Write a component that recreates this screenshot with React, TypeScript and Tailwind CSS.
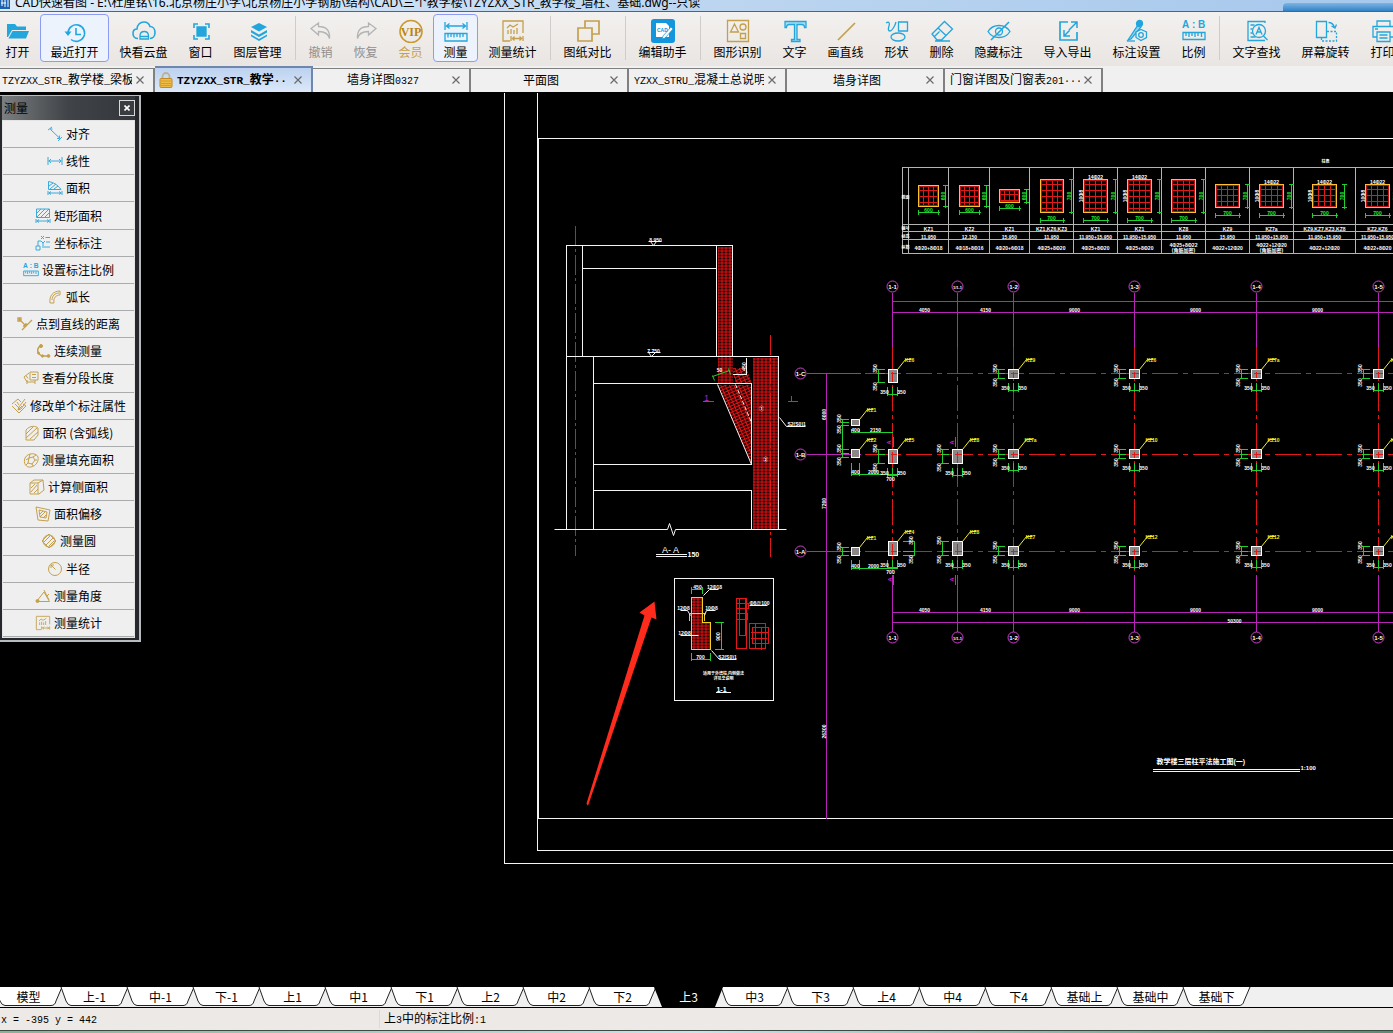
import React from "react";

const BLUE = "#22a6dc";
const GOLD = "#c4a04c";
const GRAY = "#b4b4b4";

type IconProps = { color?: string; size?: number; children: React.ReactNode; box?: number };

function Icon({ color = BLUE, size = 24, box = 24, children }: IconProps) {
  return (
    <svg
      width={size}
      height={size}
      viewBox={`0 0 ${box} ${box}`}
      fill="none"
      stroke={color}
      strokeWidth={1.3}
      className="shrink-0"
      aria-hidden="true"
    >
      {children}
    </svg>
  );
}

const RULER_24 = (
  <>
    <path d="M1 3v8M23 3v8M2 7h20M5.500 4.500L2.500 7l3 2.500M18.500 4.500l3 2.500-3 2.500" />
    <path d="M1 14.500h22v7.500H1zM4 15v3.500M7 15v3M10 15v3.500M13 15v3M16 15v3.500M19 15v3" />
  </>
);

const STATS = (
  <>
    <path d="M9 22H2V2h20v12" />
    <path d="M6 9l3-3 3 2 5-3M7 11v4M10 10v5M13 11v4M16 9v6" />
    <path d="M10 17v5M22 17v5M11 19.500h10M13.500 17.500l-2 2 2 2M18.500 17.500l2 2-2 2" />
  </>
);

function RatioMarks() {
  return (
    <>
      <text x="0" y="9" fontSize="10" fontWeight="bold" fill={BLUE} stroke="none" fontFamily="Liberation Sans, sans-serif">
        A
      </text>
      <text x="10" y="9" fontSize="10" fontWeight="bold" fill={BLUE} stroke="none" fontFamily="Liberation Sans, sans-serif">
        :
      </text>
      <text x="16" y="9" fontSize="10" fontWeight="bold" fill={BLUE} stroke="none" fontFamily="Liberation Sans, sans-serif">
        B
      </text>
      <path d="M1 13.500h22v7H1zM4 14v3M7 14v4M10 14v3M13 14v4M16 14v3M19.500 14v4" />
    </>
  );
}

type Tool = { label: string; icon: React.ReactNode; on?: boolean; tone?: "gray" | "gold"; sep?: boolean };

const TOOLS: Tool[] = [
  {
    label: "打开",
    icon: (
      <Icon>
        <path d="M1 5h8l2 2.500h9V11H6L2 18H1z" fill={BLUE} stroke="none" />
        <path d="M6.500 12H23l-3 7.500H2.500z" fill={BLUE} stroke="none" />
      </Icon>
    ),
  },
  {
    label: "最近打开",
    on: true,
    icon: (
      <Icon>
        <path d="M5 13.500a8.300 8.300 0 1 1 3 7" strokeWidth="1.600" />
        <path d="M1.500 12.500h7L5 17z" fill={BLUE} stroke="none" />
        <path d="M13 9v6.500h5" strokeWidth="1.600" />
      </Icon>
    ),
  },
  {
    label: "快看云盘",
    icon: (
      <Icon>
        <path d="M6 19.500c-3 0-5-2-5-5s2-4.500 4-4.500c0-4 3-7 7-7 3 0 5 1.500 6 4.500 3 0 5 2.500 5 6 0 3.500-2 6-5 6" strokeWidth="1.600" />
        <path d="M8 20v-3c0-3 2-4.500 4.300-4.500s4.200 1.500 4.200 4.500v3zM8 17.500h8.500" />
      </Icon>
    ),
  },
  {
    label: "窗口",
    icon: (
      <Icon>
        <path d="M8 8h9v9H8z" fill={BLUE} />
        <path d="M5 9V5h4M16 5h4v4M20 16v4h-4M9 20H5v-4" strokeWidth="1.600" />
      </Icon>
    ),
  },
  {
    label: "图层管理",
    icon: (
      <Icon>
        <path d="M13 4l8 4-8 4.500L5 8z" fill={BLUE} stroke="none" />
        <path d="M5 11l8 4.500 8-4.500v2.500L13 18l-8-4.500z" fill={BLUE} stroke="none" />
        <path d="M5 15.500l8 4.500 8-4.500v1.800L13 22l-8-4.700z" fill={BLUE} stroke="none" />
      </Icon>
    ),
  },
  {
    label: "撤销",
    sep: true,
    tone: "gray",
    icon: (
      <Icon color={GRAY}>
        <path d="M2 9.500L9.500 4v3.500c8 0 11.500 4 11 12-1-4-4-7-11-7V16z" />
      </Icon>
    ),
  },
  {
    label: "恢复",
    tone: "gray",
    icon: (
      <Icon color={GRAY}>
        <path d="M22 9.500L14.500 4v3.500c-8 0-11.500 4-11 12 1-4 4-7 11-7V16z" />
      </Icon>
    ),
  },
  {
    label: "会员",
    tone: "gold",
    icon: (
      <Icon color="#c9992f">
        <circle cx="12" cy="12.500" r="11" strokeWidth="1.600" />
        <text
          x="12"
          y="16.500"
          textAnchor="middle"
          fontSize="12"
          fontWeight="bold"
          fill="#b98414"
          stroke="none"
          fontFamily="Liberation Serif, serif"
        >
          VIP
        </text>
      </Icon>
    ),
  },
  { label: "测量", on: true, icon: <Icon>{RULER_24}</Icon> },
  { label: "测量统计", icon: <Icon color={GOLD}>{STATS}</Icon> },
  {
    label: "图纸对比",
    sep: true,
    icon: (
      <Icon color={GOLD}>
        <path d="M9 9V2h14v13h-7M2 9h14v13H2z" strokeWidth="1.700" />
      </Icon>
    ),
  },
  {
    label: "编辑助手",
    sep: true,
    icon: (
      <Icon>
        <rect x="0" y="0" width="24" height="24" rx="3" fill="#1496dc" stroke="none" />
        <path d="M5 4h10l3 3v11H5z" fill="#fff" stroke="none" />
        <path d="M22 10l-8 9-3 1 1-3 8-9z" fill="#fff" stroke="#1496dc" strokeWidth=".7" />
        <text x="6" y="13" fontSize="5" fontWeight="bold" fill="#1496dc" stroke="none" fontFamily="Liberation Sans, sans-serif">
          CAD
        </text>
      </Icon>
    ),
  },
  {
    label: "图形识别",
    sep: true,
    icon: (
      <Icon color={GOLD}>
        <path d="M1.500 1.500h21v21h-21zM8.500 5l4 8h-8zM14.500 14.500h5v5h-5z" />
        <circle cx="17" cy="8" r="3" />
      </Icon>
    ),
  },
  {
    label: "文字",
    icon: (
      <Icon>
        <path d="M2 2.500h21v6h-1.500c0-2-1-3-3-3H14v15h3v2H8.500v-2h3v-15h-5c-2 0-3 1-3 3H2z" fill="#a5dcf2" />
      </Icon>
    ),
  },
  {
    label: "画直线",
    icon: (
      <Icon color={GOLD}>
        <path d="M4 21L21 4" strokeWidth="1.700" />
      </Icon>
    ),
  },
  {
    label: "形状",
    icon: (
      <Icon>
        <path d="M1 4c3-2 4 0 3 3s-1 5 1 5 5-5 6-9" />
        <path d="M13.500 3h9v9h-9z" />
        <ellipse cx="13" cy="18" rx="7" ry="4" />
      </Icon>
    ),
  },
  {
    label: "删除",
    icon: (
      <Icon>
        <path d="M2 15L14.500 2.500l8 7.500-11 11H7zM8 9l8 7.500M4.500 17.500l5-5M5 22h15" />
      </Icon>
    ),
  },
  {
    label: "隐藏标注",
    icon: (
      <Icon>
        <path d="M1 12.500c5-8 17-8 22 0-5 8-17 8-22 0z" />
        <circle cx="12" cy="12.500" r="3.500" />
        <path d="M22 3L4 21" strokeWidth="1.600" />
      </Icon>
    ),
  },
  {
    label: "导入导出",
    icon: (
      <Icon>
        <path d="M12 3H4v18h17v-8" strokeWidth="1.700" />
        <path d="M15 3h6v6M20.500 3.500L13 11M8 11v6h6M8.500 16.500l5-5" strokeWidth="1.500" />
      </Icon>
    ),
  },
  {
    label: "标注设置",
    icon: (
      <Icon>
        <path d="M3 21L13 6l3 2L6 20z" fill="#8fd3ef" />
        <circle cx="14.500" cy="4.500" r="3" fill={BLUE} />
        <path d="M16 10.500l5.500 2.500v5.500L16 21.500l-5-3V13z" fill="#efeceb" />
        <circle cx="16" cy="16" r="2.300" />
        <path d="M2 22h8" />
      </Icon>
    ),
  },
  {
    label: "比例",
    icon: (
      <Icon>
        <RatioMarks />
      </Icon>
    ),
  },
  {
    label: "文字查找",
    sep: true,
    icon: (
      <Icon>
        <path d="M20 4V2.500H3v19h17M5.500 6h4M5.500 10h2M5.500 14h2M5.500 18h5" />
        <circle cx="14" cy="12" r="6.500" />
        <path d="M18.500 17l4 4M11 15.500l3-7 3 7M12 13h4" />
      </Icon>
    ),
  },
  {
    label: "屏幕旋转",
    icon: (
      <Icon>
        <path d="M2.500 2.500h10v16h-10z" />
        <path d="M13 12.500h9.500v9.500h-15v-3" strokeDasharray="2 1.500" />
        <path d="M14.500 3.500c3 0 5 2 6 5M17.500 7l3.500 2 1.500-3.500" />
      </Icon>
    ),
  },
  {
    label: "打印",
    icon: (
      <Icon>
        <path d="M6 7V2h13v5M6 18H2V7.500h21V18h-4M6 13h13v9.500H6zM8.500 16h8M8.500 19h8M4 10h3" />
      </Icon>
    ),
  },
];

type Measure = { label: string; icon: React.ReactNode; gold?: boolean };

const MEASURES: Measure[] = [
  { label: "对齐", icon: <path d="M1 4l4-3M11 15l4-4M3.500 3.500l9 8.500M3 3h2.500M12.500 9.500v3H10" /> },
  { label: "线性", icon: <path d="M1 4v8M15 4v8M1.500 8h13M4 6L2 8l2 2M12 6l2 2-2 2" /> },
  { label: "面积", icon: <path d="M1.500 9.500v-8c5 1 9 3 12.500 8zM2 6l4-3M3 9l6-5M7 9l4-3M1 11v4M15 11v4M1.500 13h13M4 11.500L2 13l2 1.500M12 11.500l2 1.500-2 1.500" /> },
  { label: "矩形面积", icon: <path d="M1.500 1h13v8.500h-13zM2 5l4-4M2 9l8-8M6 9l8-8M10 9l4-4M1 11v4M15 11v4M1.500 13h13M4 11.500L2 13l2 1.500M12 11.500l2 1.500-2 1.500" /> },
  { label: "坐标标注", icon: <path d="M1 11h4v4H1zM3 11V6h3M6 1l3 3M9 1L6 4M10.500 2.500H15M6 6l2 2 2-2M8 8v3M11 7h4M7 12h8" /> },
  { label: "设置标注比例", icon: null },
  { label: "弧长", gold: true, icon: <path d="M3 14C2 7 6 2 13 2v4C9 6 6 9 7 14zM5 11c0-4 3-7 7-7" /> },
  { label: "点到直线的距离", gold: true, icon: <path d="M5 14L15 4M2 3l7 7M9 7v3H6M1 2h3v3H1z" strokeWidth="1.300" /> },
  {
    label: "连续测量",
    gold: true,
    icon: (
      <>
        <path d="M6 3C2 4 2 9 4 11l3 2h6" strokeWidth="1.500" />
        <circle cx="6" cy="3" r="1.500" fill={GOLD} />
        <circle cx="3.500" cy="10" r="1" fill={GOLD} />
        <circle cx="7.500" cy="13" r="1.200" fill={GOLD} />
        <circle cx="13.500" cy="13" r="1.400" fill={GOLD} />
      </>
    ),
  },
  { label: "查看分段长度", gold: true, icon: <path d="M7 2h8v8H7zM9 4.500h4M9 7.500h4M6 3L1 7l3 5h8M3 5.500l2 3M4 10v4M12 10v4" /> },
  { label: "修改单个标注属性", gold: true, icon: <path d="M1 6l6-5 3 3M12 6l3 2-7 7-7-7M4 6l4 4M6 4l2 3M14 1L8 9l-1 3 3-1 5-7M7 12l4-4" /> },
  { label: "面积 (含弧线)", gold: true, icon: <path d="M2 5c4-5 10-4 12-2v7l-4 5H2zM2 9l7-7M2 13L13 3M6 14l8-7" /> },
  { label: "测量填充面积", gold: true, icon: <path d="M2 6c3-6 12-5 13-1s-2 9-7 10-8-4-6-9zM6 6l4-1 2 3-3 4-4-1zM3 8l3-2M7 2L6 6M13 3l-3 2M14 8h-2M10 14l-1-2M3 13l2-2" /> },
  { label: "计算侧面积", gold: true, icon: <path d="M1 4l4-3h9l1 10-5 4H1zM1 4h8v11M9 4l5-3M2 9l4-4M2 13l6-7M5 14l4-4" /> },
  { label: "面积偏移", gold: true, icon: <path d="M1 1l14 3-2 11-10-1zM4 4l8 2-1 6-6-1zM5 8l3-3M5 11l5-5M8 12l3-3" /> },
  { label: "测量圆", gold: true, icon: <><circle cx="8" cy="8" r="6" /><path d="M8 1l7 7-7 7-7-7zM3 9l6-6M5 12l7-7M8 13l5-5" /></> },
  { label: "半径", gold: true, icon: <><circle cx="8" cy="8" r="6.500" /><path d="M8.500 8.500L4 4M4 7V4h3" /></> },
  { label: "测量角度", gold: true, icon: <><path d="M1.500 13.500h13L9 4zM9 2l5 10M12 8l2-2" /><circle cx="2.500" cy="13" r="1.500" fill={GOLD} /></> },
  { label: "测量统计", gold: true, icon: null },
];

const DOC_TABS = [
  { label: "TZYZXX_STR_教学楼_梁板" },
  { label: "TZYZXX_STR_教学··", active: true },
  { label: "墙身详图0327" },
  { label: "平面图" },
  { label: "YZXX_STRU_混凝土总说明" },
  { label: "墙身详图" },
  { label: "门窗详图及门窗表201···" },
];

const SHEETS = [
  "模型", "上-1", "中-1", "下-1", "上1", "中1", "下1", "上2", "中2", "下2",
  "上3", "中3", "下3", "上4", "中4", "下4", "基础上", "基础中", "基础下",
];

/* Latin runs are set in a half-width monospace beside full-width Chinese. */
function Mixed({ text, bold }: { text: string; bold?: boolean }) {
  return (
    <>
      {text.split(/([\x20-\x7e\xb7]+)/).map((part, i) =>
        /^[\x20-\x7e\xb7]+$/.test(part) ? (
          <span
            key={i}
            className={
              bold
                ? "whitespace-pre font-['Liberation_Mono',monospace] text-[11px]"
                : "whitespace-pre font-['Liberation_Mono',monospace] text-[10px]"
            }
          >
            {part}
          </span>
        ) : (
          part
        ),
      )}
    </>
  );
}

function ToolButton({ tool }: { tool: Tool }) {
  const n = tool.label.length;
  const width = n === 2 ? "w-[45px]" : n === 3 ? "w-[57px]" : "w-[69px]";
  const tone = tool.tone === "gray" ? "text-[#8f8f8f]" : tool.tone === "gold" ? "text-[#c9a04a]" : "text-black";
  const state = tool.on ? "border-[#8c9cf5] bg-[#edf3fd]" : "border-transparent";
  return (
    <button
      type="button"
      className={`flex h-12 shrink-0 flex-col items-center gap-px rounded border pt-1 text-xs whitespace-nowrap ${width} ${tone} ${state}`}
    >
      {tool.icon}
      <span>{tool.label}</span>
    </button>
  );
}

const WHITE = "#f4f4f4";
const RED = "#e01818";
const GREEN = "#20d030";
const PURPLE = "#b823b8";
const YELLOW = "#f2ee20";

type LabelProps = { x: number; y: number; s?: number; c?: string; up?: boolean; start?: boolean; children: React.ReactNode };

function Label({ x, y, s = 5, c = "#fff", up, start, children }: LabelProps) {
  return (
    <text
      x={x}
      y={y}
      fontSize={s}
      fontWeight={s < 9 ? "bold" : "normal"}
      fill={c}
      stroke="none"
      textAnchor={start ? "start" : "middle"}
      transform={up ? `rotate(-90 ${x} ${y})` : undefined}
    >
      {children}
    </text>
  );
}

const AXES = [
  { x: 892, name: "1-1" },
  { x: 957, name: "1/1-1" },
  { x: 1013, name: "1-2" },
  { x: 1134, name: "1-3" },
  { x: 1256, name: "1-4" },
  { x: 1378, name: "1-5" },
];

const ROWS = [
  { y: 373, name: "1-C" },
  { y: 454, name: "1-B" },
  { y: 551, name: "1-A" },
];

const SPANS = [
  { x: 924, t: "4050" },
  { x: 985, t: "4150" },
  { x: 1074, t: "9000" },
  { x: 1195, t: "9000" },
  { x: 1317, t: "9000" },
];

type Section = { x: number; y: number; w: number; h: number; c: number; name: string; level: string; bars: string[]; extra?: boolean; dim: string };

const SECTIONS: Section[] = [
  { x: 918, y: 185, w: 20, h: 21, c: 928, name: "KZ1", level: "11.950", bars: ["4Φ20+8Φ18"], dim: "600" },
  { x: 959, y: 185, w: 20, h: 21, c: 969, name: "KZ2", level: "12.150", bars: ["4Φ18+8Φ16"], dim: "600" },
  { x: 999, y: 189, w: 20, h: 13, c: 1009, name: "KZ1", level: "15.950", bars: ["4Φ20+6Φ18"], dim: "600" },
  { x: 1040, y: 179, w: 23, h: 33, c: 1051, name: "KZ1,KZ6,KZ3", level: "11.950", bars: ["4Φ25+8Φ20"], dim: "700" },
  { x: 1083, y: 179, w: 24, h: 33, c: 1095, name: "KZ1", level: "11.950+15.950", bars: ["4Φ25+8Φ20"], extra: true, dim: "700" },
  { x: 1127, y: 179, w: 24, h: 33, c: 1139, name: "KZ1", level: "11.950+15.950", bars: ["4Φ25+8Φ20"], extra: true, dim: "700" },
  { x: 1171, y: 179, w: 24, h: 33, c: 1183, name: "KZ8", level: "11.950", bars: ["4Φ25+8Φ22", "(角筋加密)"], dim: "700" },
  { x: 1215, y: 184, w: 24, h: 23, c: 1227, name: "KZ9", level: "15.950", bars: ["4Φ22+12Φ20"], dim: "700" },
  { x: 1259, y: 184, w: 24, h: 23, c: 1271, name: "KZ7a", level: "11.950+15.950", bars: ["4Φ22+12Φ20", "(角筋加密)"], extra: true, dim: "700" },
  { x: 1312, y: 184, w: 24, h: 23, c: 1324, name: "KZ9,KZ7,KZ3,KZ8", level: "11.950+15.950", bars: ["4Φ22+12Φ20"], extra: true, dim: "700" },
  { x: 1365, y: 184, w: 24, h: 23, c: 1377, name: "KZ2,KZ6", level: "11.950+15.950", bars: ["4Φ22+8Φ20"], extra: true, dim: "700" },
];

function SectionCell({ s }: { s: Section }) {
  const right = s.x + s.w + (s.w > 22 ? 8 : 7);
  const bottom = s.y + s.h + (s.w > 22 ? 8 : 6);
  return (
    <g>
      <path
        stroke={RED}
        d={[1, 2, 3].map((k) => `M${s.x + Math.round((s.w * k) / 4)} ${s.y}v${s.h}`).join("")}
      />
      <path
        stroke={RED}
        d={Array.from({ length: Math.floor((s.h - 5) / 6) + 1 }, (_, k) => `M${s.x} ${s.y + 5 + k * 6}h${s.w}`).join("")}
      />
      <rect x={s.x + 1} y={s.y + 1} width={s.w - 2} height={s.h - 2} stroke="#c01010" />
      <rect x={s.x} y={s.y} width={s.w} height={s.h} stroke="#ffc030" />
      <path
        stroke={GREEN}
        d={`M${right} ${s.y - 1}v${s.h + 2}M${right - 3} ${s.y}h5M${right - 3} ${s.y + s.h}h5M${s.x - 1} ${bottom}h${s.w + 2}M${s.x} ${bottom - 3}v5M${s.x + s.w} ${bottom - 3}v5`}
      />
      <Label x={s.c} y={bottom - 1} c="#20f030">{s.dim}</Label>
      <Label x={right - 1} y={s.y + s.h / 2} c="#20f030" up>{s.dim}</Label>
      {s.extra && (
        <>
          <Label x={s.c} y={s.y - 1}>14Φ22</Label>
          <Label x={s.x - 1} y={s.y + s.h / 2} up>10Φ8</Label>
        </>
      )}
      <Label x={s.c} y={230}>{s.name}</Label>
      <Label x={s.c} y={238}>{s.level}</Label>
      {s.bars.map((b, i) => (
        <Label key={b} x={s.c} y={249 + i * 5 - (s.bars.length - 1) * 3}>{b}</Label>
      ))}
    </g>
  );
}

type Column = { x: number; y: number; w: number; h: number; cx: number; cy: number; name: string; small?: boolean; rightDim?: boolean };

const COLUMNS: Column[] = [
  { x: 888, y: 369, w: 9, h: 13, cx: 892, cy: 373, name: "KZ6" },
  { x: 888, y: 449, w: 9, h: 14, cx: 892, cy: 454, name: "KZ5" },
  { x: 888, y: 541, w: 9, h: 14, cx: 892, cy: 551, name: "KZ4", rightDim: true },
  { x: 952, y: 449, w: 10, h: 14, cx: 957, cy: 454, name: "KZ8" },
  { x: 952, y: 541, w: 10, h: 14, cx: 957, cy: 551, name: "KZ8" },
  ...[1013, 1134, 1256, 1378].flatMap((x, i) => [
    { x: x - 5, y: 369, w: 10, h: 9, cx: x, cy: 373, name: ["KZ9", "KZ6", "KZ7a", "KZ7"][i] },
    { x: x - 5, y: 449, w: 10, h: 9, cx: x, cy: 454, name: ["KZ7a", "KZ10", "KZ10", "KZ7"][i] },
    { x: x - 5, y: 546, w: 10, h: 9, cx: x, cy: 551, name: ["KZ7", "KZ12", "KZ12", "KZ7"][i] },
  ]),
  { x: 851, y: 419, w: 8, h: 6, cx: 855, cy: 422, name: "KZ1", small: true },
  { x: 851, y: 449, w: 8, h: 8, cx: 855, cy: 453, name: "KZ2", small: true },
  { x: 851, y: 547, w: 8, h: 8, cx: 855, cy: 551, name: "KZ1", small: true },
];

function PlanColumn({ c }: { c: Column }) {
  const b = c.y + c.h;
  const left = c.small ? c.x - 9 : c.rightDim ? c.x + 26 : c.x - 10;
  const tick = c.rightDim ? -12 : 8;
  const start = c.rightDim ? left : left - 2;
  return (
    <g>
      <rect x={c.x} y={c.y} width={c.w} height={c.h} fill="#8b8787" stroke="#fff" />
      {!c.small && <path stroke={RED} d={`M${c.cx} ${c.y + 2}v${c.h - 3}M${c.x + 2} ${c.cy}h${c.w - 3}`} />}
      <path stroke={GREEN} d={`M${left} ${c.y}v${c.h}M${start} ${c.y}h${tick}M${start} ${c.cy}h${tick}M${start} ${b}h${tick}`} />
      {!c.small && (
        <>
          <path stroke={GREEN} d={`M${c.cx - 5} ${b + 4}v9M${c.cx} ${b + 4}v9M${c.cx + 5} ${b + 4}v9M${c.cx - 5} ${b + 12}h10`} />
          <Label x={c.cx - 8} y={b + 11}>350</Label>
          <Label x={c.cx + 9} y={b + 11}>350</Label>
        </>
      )}
      <Label x={left - 2} y={c.y - 1} up>350</Label>
      <Label x={left - 2} y={b + 4} up>350</Label>
      <path stroke={YELLOW} shapeRendering="auto" d={`M${c.x + c.w} ${c.y}l8 -10h6`} />
      <Label x={c.x + c.w + 12} y={c.y - 8} c={YELLOW}>{c.name}</Label>
    </g>
  );
}

function Bubble({ x, y, name }: { x: number; y: number; name: string }) {
  return (
    <g>
      <circle cx={x} cy={y} r="5.500" stroke="#d040d0" shapeRendering="auto" />
      <Label x={x} y={y + 2} s={name.length > 3 ? 4 : 6}>{name}</Label>
    </g>
  );
}

function Drawing() {
  return (
    <svg
      className="block h-full w-full"
      fill="none"
      stroke={WHITE}
      strokeWidth="1"
      shapeRendering="crispEdges"
      fontFamily="'Liberation Sans','Noto Sans CJK SC',sans-serif"
      role="img"
      aria-label="教学楼三层柱平法施工图"
    >
      <defs>
        <pattern id="rebar" width="4" height="3" patternUnits="userSpaceOnUse">
          <rect width="4" height="3" fill="#240000" stroke="none" />
          <path d="M0 1h4M1 0v3" stroke="#e01414" />
        </pattern>
        <pattern id="slant" width="4" height="3" patternUnits="userSpaceOnUse" patternTransform="rotate(-24)">
          <rect width="4" height="3" fill="#240000" stroke="none" />
          <path d="M0 1h4M1 0v3" stroke="#e01414" />
        </pattern>
      </defs>
      <g transform="translate(0.5 -91.5)">
        {/* sheet frames */}
        <path d="M504 92V863H4000M537 92V850H4000M4000 138H538V818H4000" />

        {/* wall section A-A */}
        <g stroke="none" fill="url(#rebar)">
          <rect x="717" y="246" width="15" height="137" />
          <rect x="752" y="357" width="26" height="172" />
        </g>
        <path d="M717 384H751V463zM732 367h14l5 16H735z" fill="url(#slant)" stroke="none" />
        <path d="M575 225V555M770 334V556" stroke={RED} strokeDasharray="20 3 3 3" />
        <path d="M566 529V245H732V356M582 245V356M582 268H716M716 245V356M566 356H778V529M593 356V529M593 383H751V464M593 464H751M593 490H751V529M746 357v17h-14" />
        <path d="M554 529H667l2 -6 4 12 2 -6H786M717 384L751 464" shapeRendering="auto" />
        <path d="M735 384L751 422" strokeDasharray="4 2" shapeRendering="auto" />
        <path d="M648 241h13M650 241l3 4 3 -4M647 352h13M648 352l3 4 4 -4" shapeRendering="auto" />
        <Label x={655} y={241}>8.950</Label>
        <Label x={653} y={352}>7.750</Label>
        <path d="M712 375l2 5M712 376l17 -6M728 368l2 6" stroke={GREEN} shapeRendering="auto" />
        <Label x={719} y={371}>50</Label>
        <Label x={745} y={366} up>450</Label>
        <Label x={761} y={409}>①</Label>
        <Label x={765} y={460}>②</Label>
        <path d="M702 401h11M787 401h10M791 395v6" stroke={PURPLE} />
        <Label x={706} y={400} s={9} c={PURPLE}>1</Label>
        <path d="M779 417L786 426H805" shapeRendering="auto" />
        <Label x={787} y={425} start>S2(S0)1</Label>
        <Label x={670} y={552} s={9}>A- A</Label>
        <path d="M655 554h31M655 556h31" />
        <Label x={687} y={556} s={7} start>150</Label>

        {/* detail 1-1 */}
        <rect x="674" y="578" width="99" height="122" />
        <path d="M691 597h11v25h8v27h-19z" fill="url(#rebar)" stroke="#f0d020" />
        <path d="M689 613v7M704 613v7M689 613h15" stroke="#f0d020" />
        <path d="M691 586v7M702 586v7M691 589h11M714 622h9M714 649h9M721 622v27M691 652v8M710 652v8M691 659h19" stroke={GREEN} />
        <Label x={697} y={588}>450</Label>
        <Label x={719} y={636} up>900</Label>
        <Label x={700} y={658}>700</Label>
        <path d="M703 595l6 -6h9M680 610h7l3 5M715 610h-9l-2 5M680 635h18M711 650l8 9h17M749 605h18" shapeRendering="auto" />
        <Label x={714} y={588}>12Φ18</Label>
        <Label x={683} y={609}>12Φ8</Label>
        <Label x={711} y={609}>10Φ8</Label>
        <Label x={684} y={634}>12Φ8</Label>
        <Label x={727} y={658}>S2(S0)1</Label>
        <Label x={759} y={604}>Φ8@100</Label>
        <path
          d="M736 598h10v50h-10zM739 598v37h6v-37M736 603h12v5h-12M736 613h11v6h-11M749 623h16v25h-16zM752 627h16v16h-16zM755 623v25M761 626v23M750 632h18M750 638h16"
          stroke="#e01818"
        />
        <Label x={723} y={674} s={4}>适用于外墙柱,内侧做法</Label>
        <Label x={723} y={679} s={4}>详见总说明</Label>
        <Label x={721} y={691} s={7}>1-1</Label>
        <path d="M715 692h15" />

        {/* column schedule */}
        <Label x={1325} y={162} s={4}>柱表</Label>
        <path
          stroke="#b4b4b4"
          d="M4000 167H902V253H4000M902 224H4000M902 231H4000M902 239H4000M908 167V253M948 167V253M989 167V253M1029 167V253M1073 167V253M1117 167V253M1161 167V253M1205 167V253M1249 167V253M1293 167V253M1355 167V253"
        />
        <Label x={905} y={198} s={4}>截面</Label>
        <Label x={905} y={229} s={4}>编号</Label>
        <Label x={905} y={237} s={4}>标高</Label>
        <Label x={905} y={248} s={4}>纵筋</Label>
        {SECTIONS.map((s) => (
          <SectionCell key={s.x} s={s} />
        ))}

        {/* grid axes */}
        <path stroke={PURPLE} d="M892 301H4000M892 312H4000M892 612H4000M892 622H4000M826 373V818" />
        {AXES.map((a) => (
          <g key={a.x}>
            <path stroke={PURPLE} d={`M${a.x} 292V346M${a.x} 574V631`} />
            <path stroke={RED} d={`M${a.x} 346V574`} strokeDasharray="26 4 4 4" />
            <Bubble x={a.x} y={286} name={a.name} />
            <Bubble x={a.x} y={637} name={a.name} />
          </g>
        ))}
        {ROWS.map((r) => (
          <g key={r.y}>
            <path stroke={PURPLE} d={`M806 ${r.y}H860`} />
            <path stroke={RED} d={`M864 ${r.y}H4000`} strokeDasharray="26 5 5 5" />
            <Bubble x={800} y={r.y} name={r.name} />
          </g>
        ))}
        {SPANS.map((s) => (
          <g key={s.x}>
            <Label x={s.x} y={311}>{s.t}</Label>
            <Label x={s.x} y={611}>{s.t}</Label>
          </g>
        ))}
        <Label x={1234} y={622}>50300</Label>
        <Label x={825} y={414} up>6000</Label>
        <Label x={825} y={503} up>7200</Label>
        <Label x={825} y={731} up>26300</Label>

        {/* dimension chains beside the first axis */}
        <path stroke={GREEN} d="M842 419v38M851 428v4M859 428v4M851 432h41M851 462v13M859 462v13M851 474h46M851 559v10M859 559v10M851 568h46" />
        <Label x={855} y={431}>400</Label>
        <Label x={875} y={431}>2150</Label>
        <Label x={855} y={473}>400</Label>
        <Label x={873} y={473}>2000</Label>
        <Label x={855} y={567}>400</Label>
        <Label x={873} y={567}>2000</Label>
        <Label x={890} y={480}>700</Label>
        <Label x={890} y={573}>700</Label>
        {COLUMNS.map((c) => (
          <PlanColumn key={`${c.x}-${c.y}`} c={c} />
        ))}
        <path stroke="#d020d0" d="M893 436v10M955 436v10M893 574v10M955 574v10" />
        <Label x={890} y={442} c="#d020d0" s={6} up>A</Label>
        <Label x={953} y={442} c="#d020d0" s={6} up>A</Label>
        <Label x={891} y={579} c="#d020d0" s={6} up>A</Label>
        <Label x={953} y={579} c="#d020d0" s={6} up>A</Label>

        {/* drawing title */}
        <Label x={1156} y={763} s={7} start>教学楼三层柱平法施工图(一)</Label>
        <path d="M1152 769h147M1152 771h147" />
        <Label x={1300} y={769} s={6} start>1:100</Label>

        {/* pointer arrow */}
        <path
          d="M587 805L586 803 644 615 639 612 654 601 656 619 651 617 588 804z"
          fill="#ff2b1c"
          stroke="none"
          shapeRendering="auto"
        />
      </g>
    </svg>
  );
}

function MeasurePalette() {
  return (
    <section
      aria-label="测量"
      className="absolute top-[3px] left-0 w-[141px] border-t border-r-2 border-b-2 border-[#b9bcbf] bg-[#26282b] pr-1 pb-0.5 pl-0.5"
    >
      <header className="flex h-6 items-center justify-between bg-linear-to-r from-[#7c7f80] via-[#404347] to-[#33363a] pl-0.5">
        <h2 className="text-xs text-black">测量</h2>
        <button
          type="button"
          aria-label="关闭测量"
          className="flex size-4 items-center justify-center border border-[#d8d8d8] bg-[#3a3c3f]"
        >
          <svg width="6" height="6" viewBox="0 0 6 6" stroke="#fff" strokeWidth="1.600" aria-hidden="true">
            <path d="M.5.5l5 5M5.500.5l-5 5" />
          </svg>
        </button>
      </header>
      <ul className="grid h-[518px] auto-rows-fr border border-[#e4e4e4] bg-[#efefef]">
        {MEASURES.map((m, i) => (
          <li key={m.label} className="flex border-b border-[#a9abad]">
            <button type="button" className="flex w-full items-center justify-center gap-[3px] text-xs text-black">
              {m.icon ? (
                <Icon size={16} box={16} color={m.gold ? GOLD : "#3aa9dc"}>
                  <g strokeWidth="1">{m.icon}</g>
                </Icon>
              ) : (
                <Icon size={16} color={m.gold ? GOLD : BLUE}>
                  {i === 5 ? <RatioMarks /> : STATS}
                </Icon>
              )}
              <span>{m.label}</span>
            </button>
          </li>
        ))}
      </ul>
    </section>
  );
}

export default function App() {
  return (
    <div className="flex h-screen flex-col overflow-hidden bg-[#f0f0f0] font-['Noto_Sans_CJK_SC',sans-serif] text-xs text-black">
      <header className="flex h-3 shrink-0 items-end overflow-hidden border-b border-[#3d6a94] bg-linear-to-r from-[#dcebf9] via-[#bdd6f0] to-[#a5c8ec]">
        <svg width="11" height="9" viewBox="0 0 11 9" className="shrink-0 self-start" aria-hidden="true">
          <path d="M0 0h10v9H0z" fill="#1c62b0" />
          <path d="M2 0v6M5 0v7M8 0v7M1 3h5" stroke="#fff" fill="none" />
        </svg>
        <h1 className="ml-1 font-['Noto_Sans','Noto_Sans_CJK_SC',sans-serif] text-xs leading-4 whitespace-pre">
          CAD快速看图 - E:\杜厘铭\16.北京杨庄小学\北京杨庄小学钢筋\结构\CAD\三个教学楼\TZYZXX_STR_教学楼_墙柱、基础.dwg--只读
        </h1>
        <span className="ml-auto h-2 w-[110px] shrink-0 rounded-tl bg-linear-to-b from-[#7db4e2] to-[#2f83c8]" />
      </header>

      <nav
        aria-label="工具栏"
        className="-ml-[5px] flex h-[54px] shrink-0 items-start overflow-hidden bg-linear-to-b from-[#f3f1ef] to-[#e9e5e2] pt-0.5"
      >
        {TOOLS.map((t) => (
          <React.Fragment key={t.label}>
            {t.sep && <span className="mt-0.5 mr-0.5 ml-[3px] h-11 w-px shrink-0 bg-[#cfcccb]" />}
            <ToolButton tool={t} />
          </React.Fragment>
        ))}
      </nav>

      <div className="-ml-[3px] flex h-[26px] shrink-0 items-end bg-[#f0f0f0]">
        {DOC_TABS.map((t) => (
          <div
            key={t.label}
            className={
              t.active
                ? "flex h-[26px] w-[158px] shrink-0 items-center border-t-2 border-r-2 border-[#6f87ad] bg-linear-to-b from-[#bcd2f0] to-[#dce8f8] pr-[5px] pl-1"
                : "flex h-6 w-[158px] shrink-0 items-center border-t border-r-2 border-[#808080] bg-[#f0f0f0] pr-[5px] pb-0.5 pl-[5px]"
            }
          >
            {t.active && (
              <svg width="14" height="16" viewBox="0 0 14 16" className="shrink-0" aria-hidden="true">
                <path d="M3.500 7V4.500a3.500 3.500 0 0 1 7 0V7" fill="none" stroke="#b9b29a" strokeWidth="1.800" />
                <rect x="1" y="6.500" width="12" height="9" rx="1" fill="#eebb45" stroke="#c18a22" />
                <path d="M2 9h10M2 11.500h10M2 13.500h10" stroke="#d79c2c" />
              </svg>
            )}
            <button
              type="button"
              className={
                t.active
                  ? "min-w-0 flex-1 overflow-hidden pl-1 text-left font-bold whitespace-nowrap"
                  : "min-w-0 flex-1 overflow-hidden whitespace-nowrap"
              }
            >
              <Mixed text={t.label} bold={t.active} />
            </button>
            <button type="button" aria-label={`关闭 ${t.label}`} className="flex size-4 shrink-0 items-center justify-center">
              <svg width="8" height="8" viewBox="0 0 8 8" stroke="#6a6a6a" strokeWidth="1.200" aria-hidden="true">
                <path d="M.5.5l7 7M7.500.5l-7 7" />
              </svg>
            </button>
          </div>
        ))}
      </div>

      <main className="relative min-h-0 flex-1 overflow-hidden bg-black">
        <Drawing />
        <MeasurePalette />
      </main>

      <nav aria-label="布局" className="-ml-1.5 flex h-[21px] shrink-0 overflow-hidden border-b border-black bg-[#f0f0f0]">
        {SHEETS.map((s) => {
          const on = s === "上3";
          return (
            <button
              key={s}
              type="button"
              className={on ? "relative z-10 -mr-[3px] h-5 w-[69px] shrink-0 text-white" : "relative -mr-[3px] h-5 w-[69px] shrink-0"}
            >
              <svg viewBox="0 0 69 20" className="absolute inset-0 size-full" aria-hidden="true">
                {on ? (
                  <path d="M0 0l8 20h53l8-20z" fill="#000" />
                ) : (
                  <path d="M1 0l5 14q2 4.500 5 4.500h46q4 0 5-4.500L68 0" fill="#fff" stroke="#222" />
                )}
              </svg>
              <span className="relative">{s}</span>
            </button>
          );
        })}
      </nav>

      <footer className="shrink-0">
        <div className="flex h-[22px] items-center bg-[#ece9e6]">
          <p className="w-[380px] shrink-0 border-r border-[#dcd9d6] pl-px">
            <Mixed text="x = -395 y = 442" />
          </p>
          <p className="pl-1">
            <Mixed text="上3中的标注比例:1" />
          </p>
        </div>
        <div className="h-[3px] border-t border-[#3c4a44] bg-linear-to-r from-[#8fae96] via-[#cfe0ee] to-[#5f8a72]" />
      </footer>
    </div>
  );
}
